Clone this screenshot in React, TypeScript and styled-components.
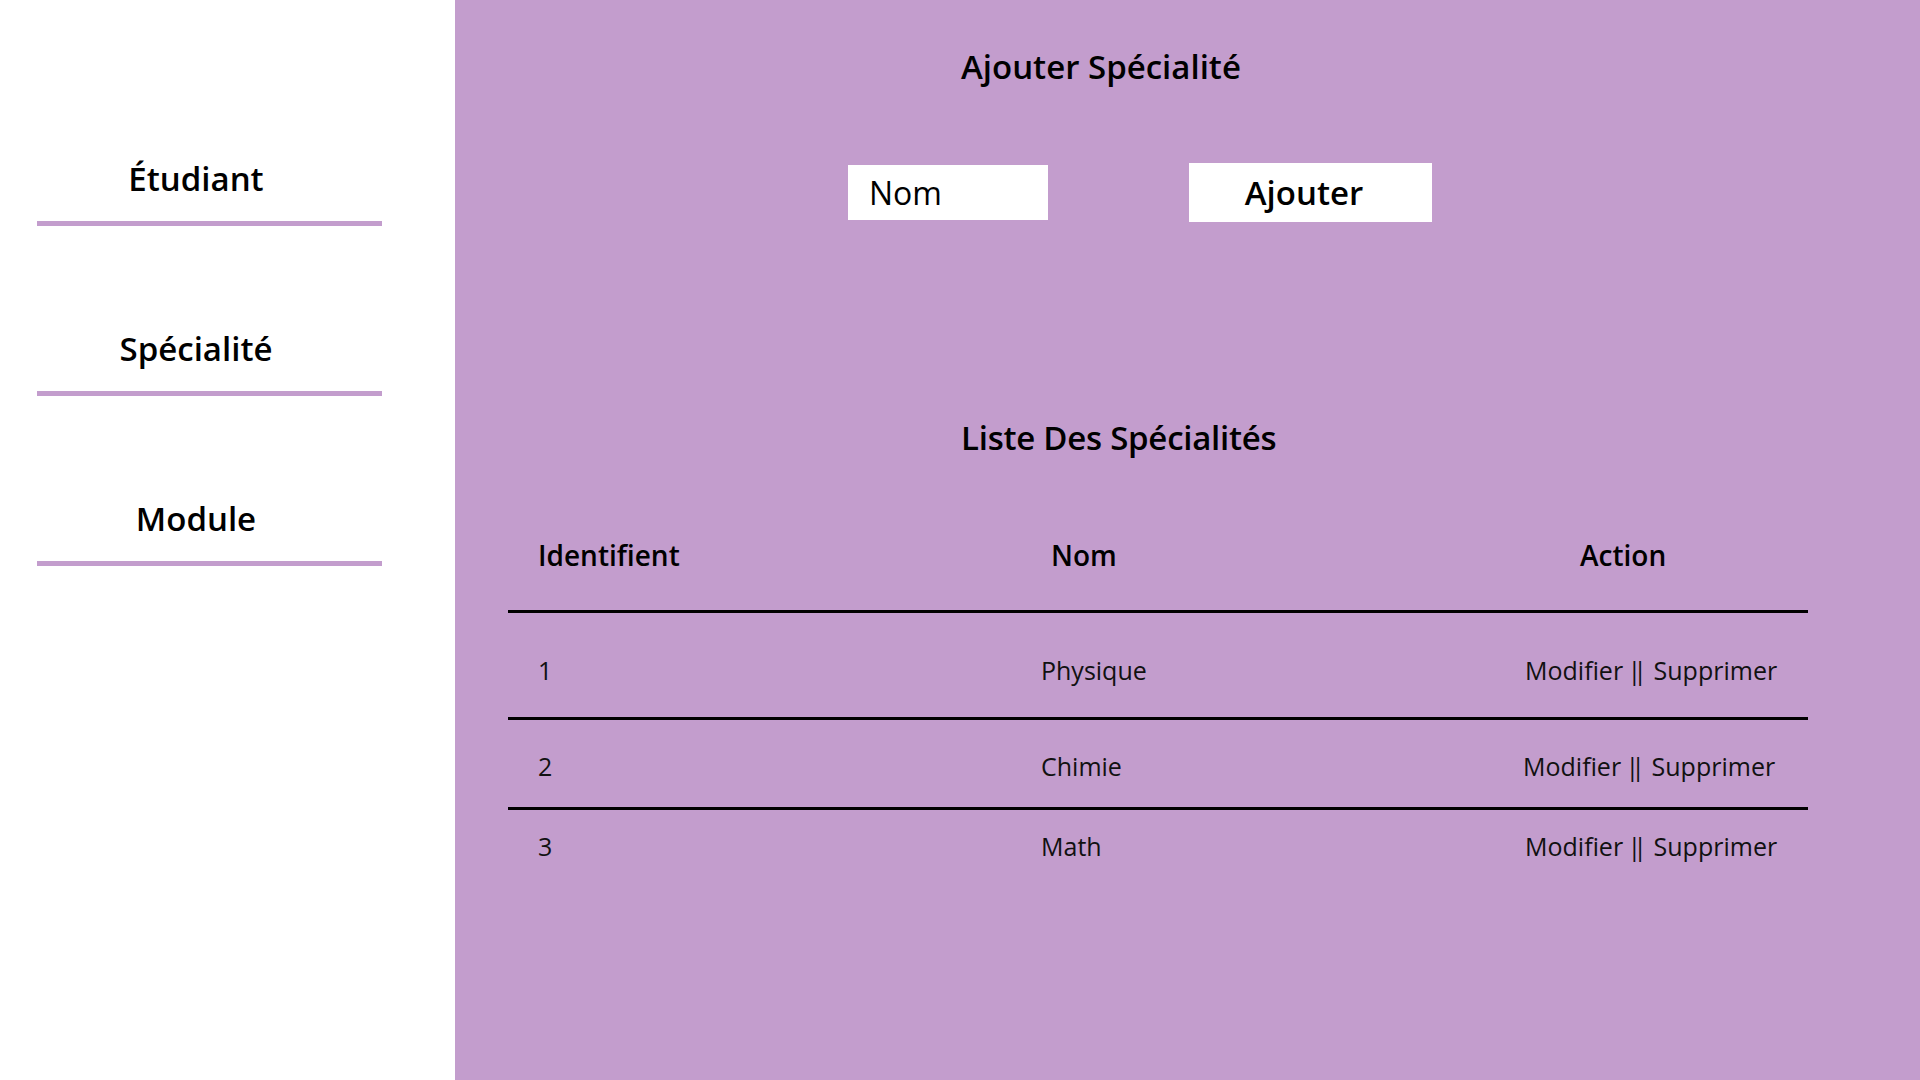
import React from "react";
import styled, { createGlobalStyle } from "styled-components";

const PURPLE = "#c39dcd";

const GlobalStyle = createGlobalStyle`
  html, body {
    margin: 0;
    padding: 0;
    background: #ffffff;
  }
  body {
    font-family: "Open Sans", "Noto Sans", "Liberation Sans", sans-serif;
    color: #000;
  }
  * { box-sizing: border-box; }
`;

const Page = styled.div`
  display: grid;
  grid-template-columns: 455px 1fr;
  min-height: 1080px;
  width: 1920px;
`;

const Sidebar = styled.nav`
  background: #ffffff;
  padding-top: 56px;
  display: flex;
  flex-direction: column;
`;

const NavItem = styled.a`
  display: block;
  margin-left: 37px;
  width: 345px;
  height: 170px;
  padding: 103px 27px 0 0;
  border-bottom: 5px solid ${PURPLE};
  text-align: center;
  font-size: 33px;
  line-height: 40px;
  font-weight: 600;
  color: #000;
  text-decoration: none;
`;

const Main = styled.main`
  background: ${PURPLE};
  padding: 47px 0 0 53px;
  display: flex;
  flex-direction: column;
  align-items: flex-start;
`;

const Title = styled.h2<{ $indent: number; $tracking?: number }>`
  margin: 0 0 0 ${(p) => p.$indent}px;
  font-size: 33px;
  line-height: 40px;
  font-weight: 600;
  letter-spacing: ${(p) => p.$tracking ?? 0}px;
  color: #000;
`;

const FormRow = styled.form`
  display: flex;
  align-items: center;
  gap: 141px;
  margin: 76px 0 0 340px;
`;

const NameInput = styled.input`
  width: 200px;
  height: 55px;
  border: none;
  outline: none;
  background: #ffffff;
  padding: 0 0 0 21px;
  font-family: "Open Sans", "Noto Sans", sans-serif;
  font-size: 32px;
  color: #000;
  &::placeholder {
    color: #000;
    opacity: 1;
  }
`;

const AddButton = styled.button`
  width: 243px;
  height: 59px;
  border: none;
  background: #ffffff;
  padding: 0 13px 0 0;
  font-family: "Open Sans", "Noto Sans", sans-serif;
  font-size: 33px;
  font-weight: 600;
  color: #000;
  text-align: center;
  cursor: pointer;
`;

const SecondTitleWrap = styled.div`
  margin-top: 196px;
`;

const Table = styled.div`
  margin-top: 77px;
  width: 1300px;
  display: flex;
  flex-direction: column;
`;

const Row = styled.div<{ $height: number; $pad: number; $line: boolean }>`
  display: grid;
  grid-template-columns: 503px 484px 313px;
  height: ${(p) => p.$height}px;
  padding-top: ${(p) => p.$pad}px;
  border-bottom: ${(p) => (p.$line ? "3px solid #000" : "none")};
`;

const HeadCell = styled.div<{ $indent: number }>`
  padding-left: ${(p) => p.$indent}px;
  font-size: 28px;
  line-height: 40px;
  font-weight: 600;
  color: #000;
`;

const Cell = styled.div<{ $shift?: number }>`
  padding-left: ${(p) => 30 - (p.$shift ?? 0)}px;
  font-size: 25px;
  line-height: 32px;
  font-weight: 400;
  color: #111;
  white-space: nowrap;
`;

const Bars = styled.span`
  letter-spacing: -8px;
  margin-right: 8px;
  margin-left: -2px;
`;

const rows = [
  { id: 1, nom: "Physique", height: 107, pad: 41, line: true, shift: 0 },
  { id: 2, nom: "Chimie", height: 90, pad: 30, line: true, shift: 2 },
  { id: 3, nom: "Math", height: 90, pad: 20, line: false, shift: 0 },
];

export default function App() {
  return (
    <>
      <GlobalStyle />
      <Page>
        <Sidebar>
          <NavItem href="#">Étudiant</NavItem>
          <NavItem href="#">Spécialité</NavItem>
          <NavItem href="#">Module</NavItem>
        </Sidebar>
        <Main>
          <Title $indent={453}>Ajouter Spécialité</Title>
          <FormRow onSubmit={(e) => e.preventDefault()}>
            <NameInput type="text" placeholder="Nom" />
            <AddButton type="submit">Ajouter</AddButton>
          </FormRow>
          <SecondTitleWrap>
            <Title $indent={453} $tracking={-0.25}>
              Liste Des Spécialités
            </Title>
          </SecondTitleWrap>
          <Table>
            <Row $height={78} $pad={0} $line={true}>
              <HeadCell $indent={30}>Identifient</HeadCell>
              <HeadCell $indent={40}>Nom</HeadCell>
              <HeadCell $indent={85}>Action</HeadCell>
            </Row>
            {rows.map((r) => (
              <Row key={r.id} $height={r.height} $pad={r.pad} $line={r.line}>
                <Cell>{r.id}</Cell>
                <Cell>{r.nom}</Cell>
                <Cell $shift={r.shift}>
                  Modifier <Bars>||</Bars> Supprimer
                </Cell>
              </Row>
            ))}
          </Table>
        </Main>
      </Page>
    </>
  );
}
